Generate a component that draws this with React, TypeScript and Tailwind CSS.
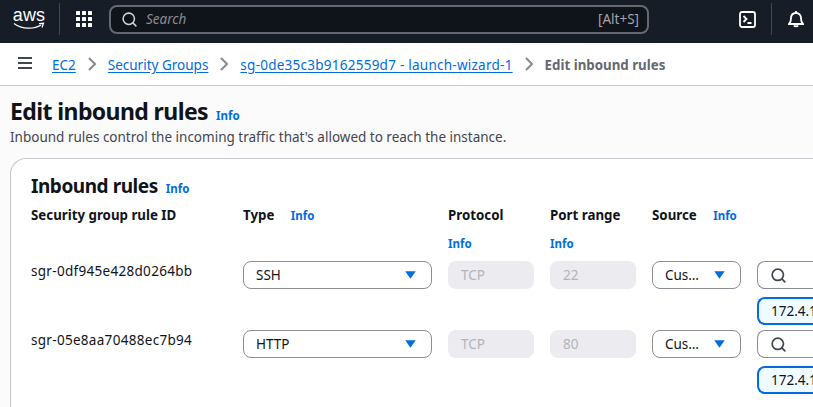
import { Search } from "lucide-react";

function Info({ className = "" }: { className?: string }) {
  return <span className={`text-[11.5px] font-bold text-[#006ce0] leading-4 ${className}`}>Info</span>;
}

function Caret() {
  return (
    <svg width="11" height="8" viewBox="0 0 11 8" className="shrink-0">
      <path d="M0.3 0.3h10.4L5.5 7.8z" fill="#006ce0" />
    </svg>
  );
}

function Crumb({ children, className = "" }: { children: string; className?: string }) {
  return <span className={`text-[13.5px] text-[#006ce0] underline underline-offset-2 leading-5 mt-[1px] ${className}`}>{children}</span>;
}

function Sep() {
  return (
    <svg width="8" height="14" viewBox="0 0 8 14" fill="none" stroke="#8c8c94" strokeWidth="2.2" className="mx-[12px] shrink-0 -mt-[1px]">
      <path d="M1 1l6 6-6 6" />
    </svg>
  );
}

function Rule({ id, type, port }: { id: string; type: string; port: string }) {
  return (
    <div className="flex h-[69px] shrink-0">
      <div className="w-[212px] shrink-0 text-[13.5px] tracking-[0.3px] text-[#0f141a] leading-5">{id}</div>
      <div className="w-[205px] shrink-0">
        <div className="w-[189px] h-[28px] border border-[#8c8c94] rounded-lg bg-white flex items-center justify-between pl-[12px] pr-[15px] text-[13.5px] text-[#0f141a]">
          <span className="mt-[1px]">{type}</span>
          <Caret />
        </div>
      </div>
      <div className="w-[102px] shrink-0">
        <div className="w-[86px] h-[28px] rounded-lg bg-[#ebebf0] flex items-center pl-[13px] text-[13.5px] text-[#b4b4bb]">TCP</div>
      </div>
      <div className="w-[102px] shrink-0">
        <div className="w-[86px] h-[28px] rounded-lg bg-[#ebebf0] flex items-center pl-[13px] text-[13.5px] text-[#b4b4bb]">{port}</div>
      </div>
      <div className="w-[105px] shrink-0">
        <div className="w-[89px] h-[28px] border border-[#8c8c94] rounded-lg bg-white flex items-center justify-between pl-[12px] pr-[15px] text-[13.5px] text-[#0f141a]">
          <span>Cus…</span>
          <Caret />
        </div>
      </div>
      <div className="w-[120px] shrink-0 flex flex-col gap-[8px]">
        <div className="h-[28px] border border-[#8c8c94] rounded-l-lg bg-white border-r-0 flex items-center pl-[12px]">
          <Search size={17} strokeWidth={2.4} className="text-[#424650]" />
        </div>
        <div className="h-[28px] border-2 border-[#006ce0] border-r-0 rounded-l-lg bg-[#f0fbff] flex items-center pl-[12px] text-[13.5px] text-[#0f141a] overflow-hidden whitespace-nowrap">
          172.4.1
        </div>
      </div>
    </div>
  );
}

export default function App() {
  return (
    <div className="w-[813px] h-[407px] overflow-hidden bg-[#fbfbfc] flex flex-col font-['Noto_Sans',sans-serif]">
      {/* top nav */}
      <div className="h-[43px] shrink-0 bg-[#161d26] flex items-center text-white pb-[5px]">
        <div className="w-[60px] shrink-0 h-[32px] border-r border-[#424650] flex flex-col items-center justify-center pr-[1px]">
          <span className="text-[18px] leading-[15px] font-['Liberation_Sans',sans-serif] -mt-[1px] text-white tracking-[0.2px]">aws</span>
          <svg width="32" height="8" viewBox="0 0 32 8" className="-mt-[1px]">
            <path d="M1 1.5C9 7.500 21 7.500 28 3" fill="none" stroke="white" strokeWidth="1.3" />
            <path d="M26 1.700l4.500-.4-1.500 4.200" fill="none" stroke="white" strokeWidth="1.2" />
          </svg>
        </div>
        <div className="ml-[16px] grid grid-cols-3 gap-[2px] w-[16px] shrink-0">
          {[0, 1, 2, 3, 4, 5, 6, 7, 8].map((i) => (
            <div key={i} className="w-[4px] h-[4px] bg-white rounded-[0.5px]" />
          ))}
        </div>
        <div className="ml-[17px] w-[540px] h-[29px] shrink-0 border-2 border-[#656871] rounded-lg bg-[#0f141a] flex items-center pl-[10px] pr-[8px]">
          <Search size={17} strokeWidth={2.2} className="text-[#d1d5db]" />
          <span className="ml-[8px] text-[13.5px] italic text-[#8c8c94] flex-1">Search</span>
          <span className="text-[13.5px] text-[#a4a4ad]">[Alt+S]</span>
        </div>
        <div className="ml-[90px] flex items-center shrink-0">
          <svg width="17" height="17" viewBox="0 0 17 17" fill="none" stroke="white" strokeWidth="1.8">
            <rect x="1" y="1" width="15" height="15" rx="2" />
            <path d="M4.500 5l3 3-3 3M8.500 12h4" />
          </svg>
          <div className="w-px h-[32px] bg-[#424650] ml-[15px]" />
          <svg width="16" height="17" viewBox="0 0 16 17" fill="none" stroke="white" strokeWidth="1.8" className="ml-[16px]">
            <path d="M1 13h14c-1.500-1.500-2-3-2-5.500C13 4 11 2 8 2S3 4 3 7.500C3 10 2.500 11.500 1 13zM6 14.500c.5 1 3.500 1 4 0M8 0v2" />
          </svg>
        </div>
      </div>

      {/* breadcrumbs */}
      <div className="h-[43px] shrink-0 bg-white border-b border-[#c6c6cd] flex items-center pl-[18px]">
        <svg width="14" height="12" viewBox="0 0 14 12" fill="none" stroke="#424650" strokeWidth="2" className="mr-[20px] -mt-[3px] shrink-0">
          <path d="M0 1h14M0 6h14M0 11h14" />
        </svg>
        <Crumb>EC2</Crumb>
        <Sep />
        <Crumb>Security Groups</Crumb>
        <Sep />
        <Crumb className="tracking-[0.25px]">sg-0de35c3b9162559d7 - launch-wizard-1</Crumb>
        <Sep />
        <span className="text-[13.3px] font-bold text-[#656871] leading-5 mt-[1px]">Edit inbound rules</span>
      </div>

      {/* page */}
      <div className="pl-[10px] pt-[10px] flex flex-col min-h-0">
        <div className="flex items-baseline shrink-0">
          <h1 className="text-[23px] tracking-[-0.6px] font-bold text-[#0f141a] leading-[30px]">Edit inbound rules</h1>
          <Info className="ml-[8px]" />
        </div>
        <p className="text-[13.5px] text-[#424650] leading-5 mt-[1px] shrink-0">
          Inbound rules control the incoming traffic that's allowed to reach the instance.
        </p>

        <div className="mt-[11px] border border-[#c6c6cd] border-r-0 rounded-tl-2xl bg-white pl-[20px] pt-[14px] h-[320px] shrink-0">
          <div className="flex items-baseline">
            <h2 className="text-[19px] tracking-[-0.45px] font-bold text-[#0f141a] leading-[26px]">Inbound rules</h2>
            <Info className="ml-[8px]" />
          </div>
          <div className="flex h-[62px] pt-[6px] text-[13.3px] font-bold text-[#0f141a] leading-5 w-[800px]">
            <div className="w-[212px] shrink-0">Security group rule ID</div>
            <div className="w-[205px] shrink-0">
              Type <Info className="ml-[13px]" />
            </div>
            <div className="w-[102px] shrink-0 flex flex-col">
              <span>Protocol</span>
              <Info className="mt-[11px]" />
            </div>
            <div className="w-[102px] shrink-0 flex flex-col">
              <span>Port range</span>
              <Info className="mt-[11px]" />
            </div>
            <div className="w-[105px] shrink-0">
              Source <Info className="ml-[13px]" />
            </div>
          </div>
          <Rule id="sgr-0df945e428d0264bb" type="SSH" port="22" />
          <Rule id="sgr-05e8aa70488ec7b94" type="HTTP" port="80" />
        </div>
      </div>
    </div>
  );
}
